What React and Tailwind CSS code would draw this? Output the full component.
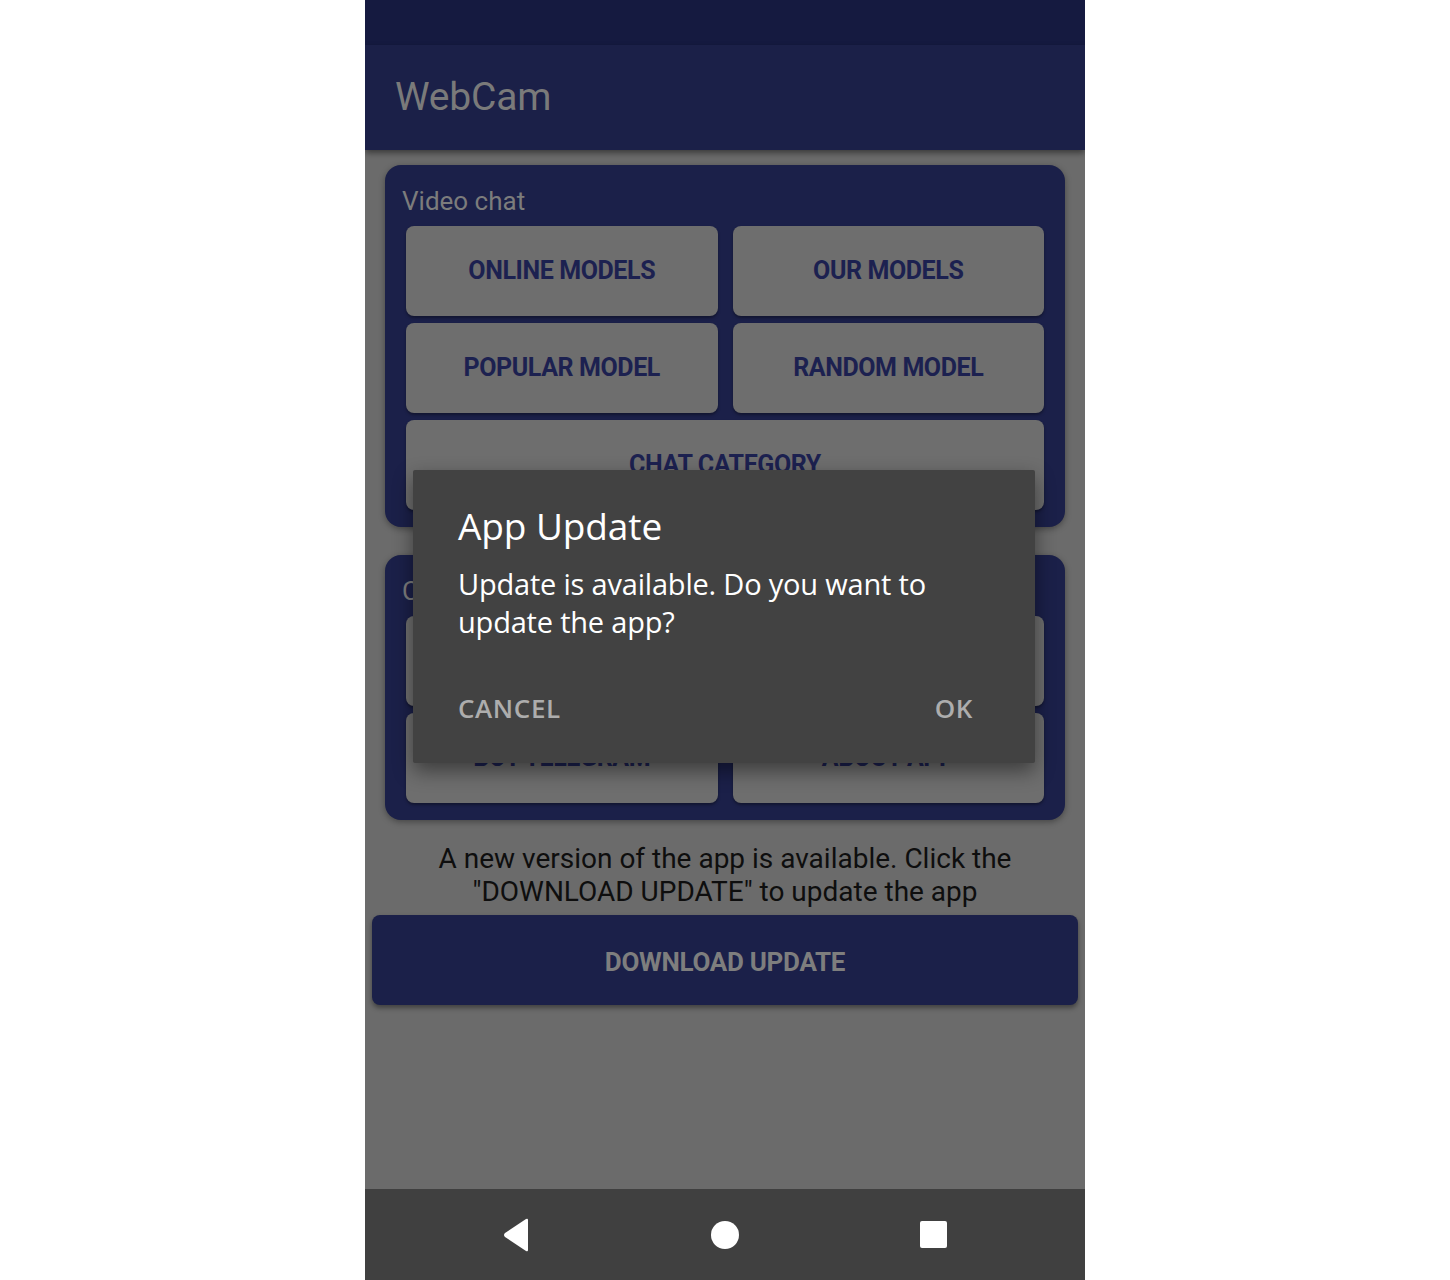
import React from 'react';

const font = { fontFamily: 'Roboto, "Liberation Sans", sans-serif' };

function GrayButton({ label, wide }) {
  return (
    <div
      className={`h-[90px] rounded-[8px] bg-[#6e6e6e] flex items-center justify-center shadow-[0_2px_3px_rgba(0,0,0,0.35)] ${wide ? 'col-span-2' : ''}`}
    >
      <span className="text-[25px] font-bold tracking-[-0.4px] text-[#1c2150]">{label}</span>
    </div>
  );
}

function Card({ title, children }) {
  return (
    <div className="mx-[20px] rounded-[16px] bg-[#1b2049] px-[21px] pt-[20px] pb-[17px] shadow-[0_2px_6px_rgba(0,0,0,0.35)]">
      <div className="text-[26px] leading-[32px] text-[#7c7c7c] -ml-[4px] mb-[9px]">{title}</div>
      <div className="grid grid-cols-2 gap-x-[15px] gap-y-[7px]">{children}</div>
    </div>
  );
}

export default function App() {
  return (
    <div className="w-full min-h-screen bg-white flex justify-center" style={font}>
      <div className="relative w-[720px] h-[1280px] bg-[#6b6b6b] flex flex-col overflow-hidden">
        {/* status bar */}
        <div className="h-[45px] bg-[#151a40] shrink-0" />
        {/* app bar */}
        <div className="h-[105px] bg-[#1b2048] shrink-0 flex items-center px-[30px] shadow-[0_3px_6px_rgba(0,0,0,0.45)] z-10">
          <span className="text-[39px] text-[#7a7a7a] tracking-[-0.2px]">WebCam</span>
        </div>

        <div className="flex-1 flex flex-col pt-[15px]">
          <Card title="Video chat">
            <GrayButton label="ONLINE MODELS" />
            <GrayButton label="OUR MODELS" />
            <GrayButton label="POPULAR MODEL" />
            <GrayButton label="RANDOM MODEL" />
            <GrayButton label="CHAT CATEGORY" wide />
          </Card>

          <div className="h-[28px]" />

          <Card title="Contacts">
            <GrayButton label="OUR CHANNEL" />
            <GrayButton label="OUR WEBSITE" />
            <GrayButton label="BOT TELEGRAM" />
            <GrayButton label="ABOUT APP" />
          </Card>

          <p className="mt-[22px] text-center text-[28px] leading-[33px] text-[#0e0e0e]">
            A new version of the app is available. Click the
            <br />
            "DOWNLOAD UPDATE" to update the app
          </p>

          <div className="mx-[7px] mt-[7px] h-[90px] rounded-[8px] bg-[#1b2049] flex items-center justify-center shadow-[0_3px_5px_rgba(0,0,0,0.4)]">
            <span className="text-[26px] font-bold tracking-[-0.3px] text-[#7e7e7e] translate-y-[2px]">DOWNLOAD UPDATE</span>
          </div>
        </div>

        {/* navigation bar */}
        <div className="h-[91px] bg-[#404040] shrink-0 flex items-center justify-center">
          <div className="w-[208px] flex justify-center">
            <svg width="30" height="34" viewBox="0 0 30 34">
              <path d="M26 2 L26 32 Q26 34 24 33 L3 19 Q1 17 3 15 L24 1 Q26 0 26 2 Z" fill="#fff" />
            </svg>
          </div>
          <div className="w-[208px] flex justify-center">
            <div className="w-[28px] h-[28px] rounded-full bg-white" />
          </div>
          <div className="w-[208px] flex justify-center">
            <div className="w-[27px] h-[27px] rounded-[2px] bg-white" />
          </div>
        </div>

        {/* dialog */}
        <div
          className="absolute left-[48px] top-[470px] w-[622px] h-[293px] bg-[#424242] rounded-[2px] shadow-[0_8px_20px_rgba(0,0,0,0.45)] px-[45px] pt-[32px] flex flex-col"
          style={{ fontFamily: '"Open Sans", Roboto, sans-serif' }}
        >
          <div className="text-[37px] leading-[48px] text-white tracking-[-0.1px]">App Update</div>
          <div className="mt-[15px] text-[29px] leading-[38px] text-white tracking-[-0.2px]">
            Update is available. Do you want to
            <br />
            update the app?
          </div>
          <div className="mt-auto mb-[35px] flex justify-between pr-[17px]">
            <span className="text-[26px] font-semibold text-[#adadad] tracking-[0.6px]">CANCEL</span>
            <span className="text-[26px] font-semibold text-[#adadad] tracking-[0.6px]">OK</span>
          </div>
        </div>
      </div>
    </div>
  );
}
